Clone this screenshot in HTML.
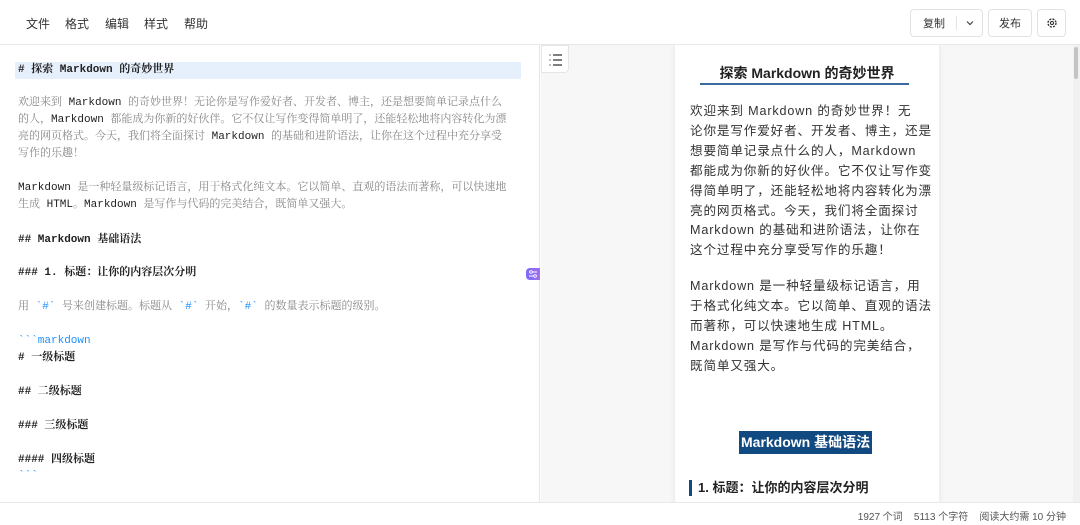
<!DOCTYPE html>
<html><head><meta charset="utf-8"><style>
*{margin:0;padding:0;box-sizing:border-box}
body{width:1080px;height:525px;overflow:hidden;background:#fff;font-family:"Liberation Sans","Noto Sans CJK SC",sans-serif;position:relative;color:#333}
.hdr{position:absolute;left:0;top:0;width:1080px;height:45px;border-bottom:1px solid #e8e8e8;background:#fff}
.menu{position:absolute;top:15px;font-size:12px;color:#333}
.btn{position:absolute;top:9px;height:28px;border:1px solid #e3e3e3;border-radius:4px;font-size:11px;color:#333;display:flex;align-items:center;justify-content:center}
.ed{position:absolute;left:0;top:45px;width:540px;height:457px;border-right:1px solid #e5e5e5;font-family:"Liberation Mono","Noto Serif CJK SC",monospace;font-size:11px;color:#888}
.l{position:absolute;left:18px;white-space:nowrap;line-height:17px;height:17px}
.b{color:#222;font-weight:bold}
.k{color:#1e90ff}
.pv{position:absolute;left:541px;top:45px;width:539px;height:457px;background:#f7f7f7;overflow:hidden}
.card{position:absolute;left:134px;top:0;width:264px;height:470px;background:#fff;box-shadow:0 0 6px rgba(0,0,0,.08)}
.p{position:absolute;left:15px;font-size:12.6px;line-height:19.9px;letter-spacing:0.85px;color:#333;white-space:nowrap}
.st{position:absolute;left:0;top:502px;width:1080px;height:23px;border-top:1px solid #e8e8e8;background:#fff;font-size:10px;color:#555}
</style></head><body>
<div class="hdr">
<span class="menu" style="left:26px">文件</span>
<span class="menu" style="left:65px">格式</span>
<span class="menu" style="left:105px">编辑</span>
<span class="menu" style="left:144px">样式</span>
<span class="menu" style="left:184px">帮助</span>
<div class="btn" style="left:910px;width:73px;justify-content:flex-start"><span style="margin-left:12px">复制</span><span style="position:absolute;left:45px;top:6px;height:14px;border-left:1px solid #e3e3e3"></span><svg style="position:absolute;left:55px;top:10px" width="8" height="6" viewBox="0 0 8 6"><path d="M1 1.5l3 3 3-3" fill="none" stroke="#444" stroke-width="1.2"/></svg></div>
<div class="btn" style="left:988px;width:44px">发布</div>
<div class="btn" style="left:1037px;width:29px"><svg width="12" height="12" viewBox="0 0 12 12"><circle cx="6" cy="6" r="4" fill="none" stroke="#333" stroke-width="1.4" stroke-dasharray="2 1.2"/><circle cx="6" cy="6" r="1.6" fill="none" stroke="#333" stroke-width="1.1"/></svg></div>
</div>

<div class="ed">
<div style="position:absolute;left:15px;top:17px;width:506px;height:17px;background:#e6f0fc"></div>
<div class="l b" style="top:17px"># 探索 Markdown 的奇妙世界</div>
<div class="l" style="top:50px">欢迎来到 <span style="color:#222">Markdown</span> 的奇妙世界！无论你是写作爱好者、开发者、博主，还是想要简单记录点什么</div>
<div class="l" style="top:67px">的人，<span style="color:#222">Markdown</span> 都能成为你新的好伙伴。它不仅让写作变得简单明了，还能轻松地将内容转化为漂</div>
<div class="l" style="top:84px">亮的网页格式。今天，我们将全面探讨 <span style="color:#222">Markdown</span> 的基础和进阶语法，让你在这个过程中充分享受</div>
<div class="l" style="top:101px">写作的乐趣！</div>
<div class="l" style="top:135px"><span style="color:#222">Markdown</span> 是一种轻量级标记语言，用于格式化纯文本。它以简单、直观的语法而著称，可以快速地</div>
<div class="l" style="top:152px">生成 <span style="color:#222">HTML</span>。<span style="color:#222">Markdown</span> 是写作与代码的完美结合，既简单又强大。</div>
<div class="l b" style="top:187px">## Markdown 基础语法</div>
<div class="l b" style="top:220px">### 1. 标题：让你的内容层次分明</div>
<div class="l" style="top:254px">用 <span class="k">&#96;#&#96;</span> 号来创建标题。标题从 <span class="k">&#96;#&#96;</span> 开始，<span class="k">&#96;#&#96;</span> 的数量表示标题的级别。</div>
<div class="l k" style="top:288px">&#96;&#96;&#96;markdown</div>
<div class="l b" style="top:305px"># 一级标题</div>
<div class="l b" style="top:339px">## 二级标题</div>
<div class="l b" style="top:373px">### 三级标题</div>
<div class="l b" style="top:407px">#### 四级标题</div>
<div class="l k" style="top:423px">&#96;&#96;&#96;</div>
<div style="position:absolute;left:526px;top:223px;width:14px;height:12px;border-radius:4px 0 0 4px;background:linear-gradient(90deg,#7b6cf6,#a36cf0)"><svg width="14" height="12" viewBox="0 0 14 12"><path d="M3 4h8M3 8h8" stroke="#fff" stroke-width="1"/><circle cx="5" cy="4" r="1.3" fill="#8a6cf3" stroke="#fff" stroke-width=".8"/><circle cx="9" cy="8" r="1.3" fill="#8a6cf3" stroke="#fff" stroke-width=".8"/></svg></div>
</div>

<div class="pv">
<div style="position:absolute;left:0;top:0;width:28px;height:28px;background:#fff;border:1px solid #e5e5e5;border-radius:0 0 5px 0;z-index:2"><svg width="28" height="28" viewBox="0 0 28 28"><g stroke="#333" stroke-width="1.3"><path d="M11 9h9M11 14h9M11 19h9"/><path d="M7.5 9h1M7.5 14h1M7.5 19h1"/></g></svg></div>
<div class="card">
<div style="position:absolute;left:0;width:264px;top:18px;text-align:center;font-size:14px;font-weight:bold;color:#222">探索 Markdown 的奇妙世界</div>
<div style="position:absolute;left:25px;top:38px;width:209px;height:2px;background:#3a6aa0"></div>
<div class="p" style="top:57px">欢迎来到 Markdown 的奇妙世界！无<br>论你是写作爱好者、开发者、博主，还是<br>想要简单记录点什么的人，Markdown<br>都能成为你新的好伙伴。它不仅让写作变<br>得简单明了，还能轻松地将内容转化为漂<br>亮的网页格式。今天，我们将全面探讨<br>Markdown 的基础和进阶语法，让你在<br>这个过程中充分享受写作的乐趣！</div>
<div class="p" style="top:232px">Markdown 是一种轻量级标记语言，用<br>于格式化纯文本。它以简单、直观的语法<br>而著称，可以快速地生成 HTML。<br>Markdown 是写作与代码的完美结合，<br>既简单又强大。</div>
<div style="position:absolute;left:64px;top:386px;height:23px;padding:0 2px;background:#114a80;color:#fff;font-size:14px;font-weight:bold;line-height:23px">Markdown 基础语法</div>
<div style="position:absolute;left:14px;top:435px;height:16px;border-left:3px solid #114a80;padding-left:6px;font-size:13px;font-weight:bold;color:#222;line-height:16px">1. 标题：让你的内容层次分明</div>
</div>
<div style="position:absolute;left:532px;top:0;width:7px;height:457px;background:#f1f1f1"></div>
<div style="position:absolute;left:533px;top:2px;width:4px;height:32px;background:#c4c4c4;border-radius:2px"></div>
</div>

<div class="st"><span style="position:absolute;right:14px;top:5px;white-space:nowrap">1927 个词&nbsp;&nbsp;&nbsp;&nbsp;5113 个字符&nbsp;&nbsp;&nbsp;&nbsp;阅读大约需 10 分钟</span></div>
</body></html>
